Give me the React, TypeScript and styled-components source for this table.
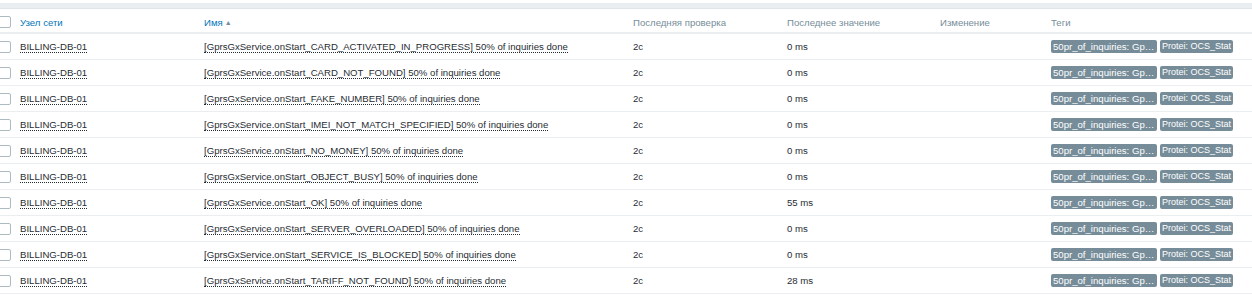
import React from "react";
import styled, { createGlobalStyle } from "styled-components";

const GlobalStyle = createGlobalStyle`
  html, body {
    margin: 0;
    padding: 0;
    background: #ffffff;
    overflow: hidden;
  }
  body {
    font-family: "Liberation Sans", Arial, sans-serif;
    font-size: 9.6px;
    color: #1f2c33;
  }
`;

const Page = styled.div`
  width: 1252px;
  padding-top: 3px;
`;

const TopBand = styled.div`
  height: 5px;
  background: #ebeef0;
  border-bottom: 1px solid #dfe4e7;
`;

const COLS = "20px 184px 429px 154px 153px 111px 1fr";

const Row = styled.div<{ $head?: boolean }>`
  display: grid;
  grid-template-columns: ${COLS};
  align-items: center;
  height: ${({ $head }) => ($head ? "25px" : "26px")};
  box-sizing: border-box;
  padding-top: ${({ $head }) => ($head ? "3px" : "0")};
  border-bottom: ${({ $head }) => ($head ? "2px" : "1px")} solid #ebeef0;
  white-space: nowrap;
`;

const Cell = styled.div`
  overflow: hidden;
  display: flex;
  align-items: center;
`;

const HeadCell = styled(Cell)<{ $link?: boolean }>`
  color: ${({ $link }) => ($link ? "#0275b8" : "#768d99")};
`;

const Arrow = styled.span`
  color: #768d99;
  font-size: 7px;
  margin-left: 2px;
`;

const Check = styled.span`
  display: block;
  width: 15px;
  height: 12px;
  margin-left: -4px;
  border: 1px solid #acbbc2;
  border-radius: 2px;
  box-sizing: border-box;
  background: #fff;
`;

const Dotted = styled.span`
  color: #1f2c33;
  border-bottom: 1px dotted #1f2c33;
  line-height: 11px;
`;

const Tag = styled.span<{ $max?: number; $size: number }>`
  display: inline-block;
  flex: none;
  background: #768d99;
  color: #ffffff;
  border-radius: 2px;
  padding: 0 2px;
  margin-right: 3px;
  height: 13px;
  line-height: 13px;
  font-size: ${({ $size }) => `${$size}px`};
  max-width: ${({ $max }) => ($max ? `${$max}px` : "none")};
  overflow: hidden;
  text-overflow: ellipsis;
  box-sizing: border-box;
`;

const rows = [
  ["CARD_ACTIVATED_IN_PROGRESS", "0 ms"],
  ["CARD_NOT_FOUND", "0 ms"],
  ["FAKE_NUMBER", "0 ms"],
  ["IMEI_NOT_MATCH_SPECIFIED", "0 ms"],
  ["NO_MONEY", "0 ms"],
  ["OBJECT_BUSY", "0 ms"],
  ["OK", "55 ms"],
  ["SERVER_OVERLOADED", "0 ms"],
  ["SERVICE_IS_BLOCKED", "0 ms"],
  ["TARIFF_NOT_FOUND", "28 ms"],
];

export default function App() {
  return (
    <Page>
      <GlobalStyle />
      <TopBand />
      <Row $head>
        <Cell>
          <Check />
        </Cell>
        <HeadCell $link>Узел сети</HeadCell>
        <HeadCell $link>
          Имя<Arrow>▲</Arrow>
        </HeadCell>
        <HeadCell>Последняя проверка</HeadCell>
        <HeadCell>Последнее значение</HeadCell>
        <HeadCell>Изменение</HeadCell>
        <HeadCell>Теги</HeadCell>
      </Row>
      {rows.map(([code, value]) => (
        <Row key={code}>
          <Cell>
            <Check />
          </Cell>
          <Cell>
            <Dotted>BILLING-DB-01</Dotted>
          </Cell>
          <Cell>
            <Dotted>[GprsGxService.onStart_{code}] 50% of inquiries done</Dotted>
          </Cell>
          <Cell>2с</Cell>
          <Cell>{value}</Cell>
          <Cell />
          <Cell>
            <Tag $max={106} $size={9.6}>
              50pr_of_inquiries: GprsGxService
            </Tag>
            <Tag $size={9}>Protei: OCS_Stat</Tag>
          </Cell>
        </Row>
      ))}
    </Page>
  );
}
